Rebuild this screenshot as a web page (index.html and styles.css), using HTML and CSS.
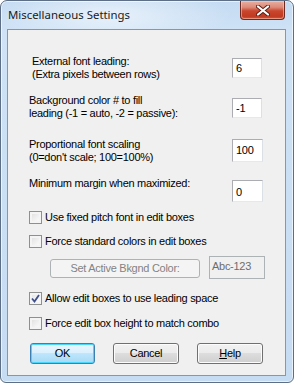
FILE: index.html
```html
<!DOCTYPE html>
<html lang="en">
<head>
  <meta charset="UTF-8">
  <meta name="viewport" content="width=device-width, initial-scale=1.0">
  <title>Miscellaneous Settings</title>
  <link rel="stylesheet" href="styles.css">
</head>
<body>
  <div class="window">
    <div class="titlebar">
      <span class="title">Miscellaneous Settings</span>
      <div class="close-btn">
        <svg width="14" height="11" viewBox="0 0 14 11">
          <path d="M2 1.5 L12 9.5 M12 1.5 L2 9.5" stroke="#5a1f17" stroke-width="4" stroke-linecap="round"/>
          <path d="M2 1.5 L12 9.5 M12 1.5 L2 9.5" stroke="#ffffff" stroke-width="2.2" stroke-linecap="round"/>
        </svg>
      </div>
    </div>

    <div class="client">
      <!-- Numeric settings -->
      <div class="row row-leading">
        <div class="lbl lbl-wide">External font leading:<br>(Extra pixels between rows)</div>
        <div class="edit">6</div>
      </div>
      <div class="row row-bkgnd">
        <div class="lbl">Background color # to fill<br>leading (-1 = auto, -2 = passive):</div>
        <div class="edit">-1</div>
      </div>
      <div class="row row-scale">
        <div class="lbl">Proportional font scaling<br>(0=don't scale; 100=100%)</div>
        <div class="edit edit-tall">100</div>
      </div>
      <div class="row row-margin">
        <div class="lbl">Minimum margin when maximized:</div>
        <div class="edit edit-mid">0</div>
      </div>

      <!-- Check boxes -->
      <div class="check check-1"><span class="box"></span>Use fixed pitch font in edit boxes</div>
      <div class="check check-2"><span class="box"></span>Force standard colors in edit boxes</div>

      <div class="color-row">
        <div class="btn-disabled">Set Active Bkgnd Color:</div>
        <div class="sample">Abc-123</div>
      </div>

      <div class="check check-3">
        <span class="box checked">
          <svg width="9" height="9" viewBox="0 0 9 9">
            <path d="M1 4.5 L3.5 7.5 L8 1" fill="none" stroke="#3d4f8c" stroke-width="1.8"/>
          </svg>
        </span>Allow edit boxes to use leading space
      </div>
      <div class="check check-4"><span class="box"></span>Force edit box height to match combo</div>

      <!-- Dialog buttons -->
      <div class="buttons">
        <div class="btn btn-default">OK</div>
        <div class="btn">Cancel</div>
        <div class="btn"><u>H</u>elp</div>
      </div>
    </div>
  </div>
</body>
</html>
```

FILE: styles.css
```css
/* Basic styles */
body {
    margin: 0;
    background: #ffffff;
    font-family: "Liberation Sans", Arial, sans-serif;
    font-size: 11px;
    letter-spacing: -0.28px;
    color: #000000;
}

/* Window frame */
.window {
    width: 294px;
    height: 383px;
    box-sizing: border-box;
    border: 1px solid #5c6f86;
    border-radius: 7px 7px 6px 6px;
    padding: 0 7px 6px 6px;
    background:
        radial-gradient(ellipse 120px 30px at 110px 14px, rgba(255, 255, 255, 0.55), rgba(255, 255, 255, 0) 100%),
        linear-gradient(to bottom, #c4dbf2 0px, #cfe2f6 30px, #c6dcf2 100%);
    box-shadow: inset 0 0 0 1px rgba(255, 255, 255, 0.6);
}

.titlebar {
    height: 28px;
    display: flex;
    align-items: flex-start;
    justify-content: space-between;
}

.title {
    font-family: "Noto Sans", "Liberation Sans", sans-serif;
    font-size: 11.4px;
    letter-spacing: 0;
    color: #1b1b1b;
    margin: 6px 0 0 1px;
}

.close-btn {
    width: 43px;
    height: 18px;
    margin-right: 1px;
    border: 1px solid #6c2a22;
    border-top: none;
    border-radius: 0 0 4px 4px;
    display: flex;
    align-items: center;
    justify-content: center;
    background: linear-gradient(to bottom, #e9b0a2 0%, #dc8a78 35%, #c9462d 55%, #c13a22 85%, #d25a3a 100%);
    box-shadow: inset 0 0 0 1px rgba(255, 210, 200, 0.5);
}

/* Client area */
.client {
    height: 347px;
    box-sizing: border-box;
    border: 1px solid #8796a8;
    background: #f0f0f0;
    padding-top: 25px;
}

.row {
    display: flex;
    align-items: flex-start;
    padding-left: 21px;
}

.lbl {
    line-height: 13px;
    width: 203px;
}

.lbl-wide {
    margin-left: 3px;
    width: 200px;
}

.edit {
    width: 30px;
    height: 20px;
    box-sizing: border-box;
    background: #ffffff;
    border: 1px solid #abadb3;
    border-right-color: #dbdfe6;
    border-bottom-color: #e3e9ef;
    padding: 3px 0 0 3px;
    line-height: 13px;
}

.row-leading .edit { margin-top: 3px; }
.row-bkgnd { margin-top: 13px; }
.row-bkgnd .edit { margin-top: 4px; }
.row-scale { margin-top: 18px; }
.row-scale .edit { margin-top: 1px; }
.row-margin { margin-top: 13px; }
.row-margin .edit { margin-top: 3px; }

.edit-tall {
    width: 31px;
    height: 23px;
    padding-top: 4px;
}

.edit-mid {
    width: 31px;
    height: 22px;
    padding-top: 5px;
}

/* Check boxes */
.check {
    display: flex;
    align-items: flex-start;
    gap: 3px;
    padding-left: 21px;
    line-height: 13px;
}

.check-1 { margin-top: 9px; }
.check-2 { margin-top: 11px; }
.check-3 { margin-top: 13px; }
.check-4 { margin-top: 12px; }

.box {
    width: 13px;
    height: 13px;
    box-sizing: border-box;
    border: 1px solid #8e8f8f;
    background: linear-gradient(135deg, #dcdcdc 0%, #f2f2f2 60%, #ffffff 100%);
    box-shadow: inset 0 0 0 2px #f4f4f4;
    display: flex;
    align-items: center;
    justify-content: center;
}

.box.checked {
    background: linear-gradient(135deg, #e2e2e2 0%, #f6f6f6 70%, #ffffff 100%);
}

/* Colour sample row */
.color-row {
    margin-top: 8px;
    display: flex;
    align-items: flex-start;
    padding-left: 42px;
}

.btn-disabled {
    width: 150px;
    height: 19px;
    margin-top: 3px;
    box-sizing: border-box;
    border: 1px solid #adb2b5;
    border-radius: 3px;
    background: #f4f4f4;
    color: #838383;
    text-align: center;
    line-height: 17px;
}

.sample {
    width: 56px;
    height: 23px;
    margin-left: 9px;
    box-sizing: border-box;
    border: 1px solid #adb2b5;
    background: #f0f0f0;
    color: #6d6d6d;
    padding: 3px 0 0 2px;
    line-height: 13px;
}

/* Dialog buttons */
.buttons {
    margin-top: 13px;
    display: flex;
    gap: 18px;
    padding-left: 22px;
}

.btn {
    width: 66px;
    height: 21px;
    box-sizing: border-box;
    border: 1px solid #707070;
    border-radius: 3px;
    background: linear-gradient(to bottom, #f2f2f2 0%, #ebebeb 49%, #dddddd 50%, #cfcfcf 100%);
    box-shadow: inset 0 0 0 1px #fcfcfc;
    text-align: center;
    line-height: 19px;
}

.btn-default {
    width: 65px;
    border-color: #3c7fb1;
    background: linear-gradient(to bottom, #eaf6fd 0%, #d9f0fc 49%, #bee6fd 50%, #a7d9f5 100%);
    box-shadow: inset 0 0 0 1px #48d6fd;
}
```
